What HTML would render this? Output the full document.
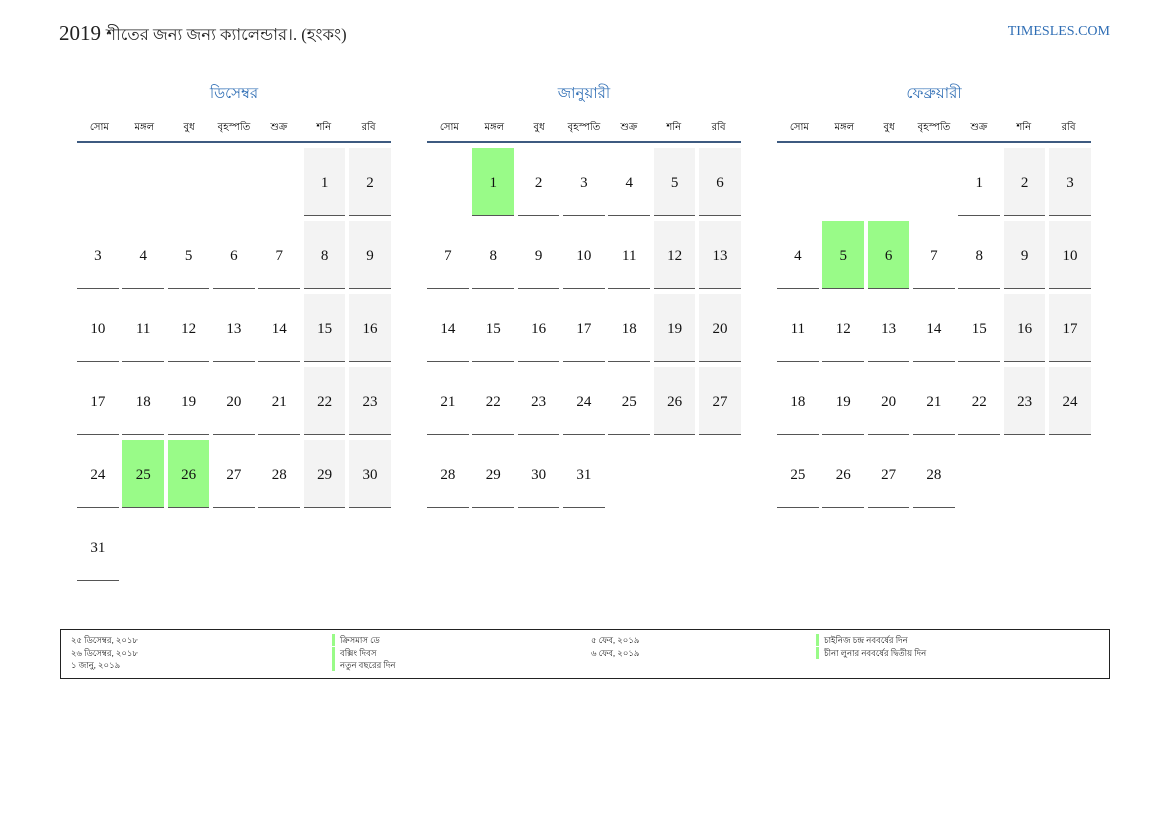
<!DOCTYPE html>
<html><head><meta charset="utf-8"><style>
body{margin:0;width:1169px;height:827px;background:#fff;position:relative;font-family:"Liberation Serif",serif;overflow:hidden}
.t{position:absolute;left:59px;top:21px;font-size:21px;color:#222}
.t .bn{font-size:16.5px}
.site{position:absolute;right:59px;top:24px;font-size:14px;color:#2e6db4}
.m{position:absolute;top:83px;width:314px}
.mt{text-align:center;color:#2e6db4;font-size:15px;height:22px;line-height:22px}
.dh{display:grid;grid-template-columns:repeat(7,1fr);margin-top:15px;font-size:10px;text-align:center;height:16px;line-height:16px;border-bottom:2px solid #3d5a80;padding-bottom:5px}
.g{display:grid;grid-template-columns:repeat(7,41.7px);column-gap:3.68px;row-gap:5px;grid-auto-rows:68px;margin-top:5px}
.g div{text-align:center;line-height:70px;font-size:15px;color:#111}
.g .f{border-bottom:1.5px solid #555}
.g .w{background:#f3f3f3}
.g .h{background:#99fb88}
.lg{position:absolute;left:60px;top:629px;width:1048px;height:48px;border:1.5px solid #222;font-size:8.5px;color:#222}
.lg span{position:absolute;line-height:12px}
.b{border-left:3px solid #99fb88;padding-left:5px}
</style></head><body>
<div class="t">2019 <span class="bn">শীতের জন্য জন্য ক্যালেন্ডার।. (হংকং)</span></div>
<div class="site">TIMESLES.COM</div>

<div class="m" style="left:77px"><div class="mt">ডিসেম্বর</div>
<div class="dh"><span>সোম</span><span>মঙ্গল</span><span>বুধ</span><span>বৃহস্পতি</span><span>শুক্র</span><span>শনি</span><span>রবি</span></div>
<div class="g">
<div></div><div></div><div></div><div></div><div></div><div class="f w">1</div><div class="f w">2</div>
<div class="f">3</div><div class="f">4</div><div class="f">5</div><div class="f">6</div><div class="f">7</div><div class="f w">8</div><div class="f w">9</div>
<div class="f">10</div><div class="f">11</div><div class="f">12</div><div class="f">13</div><div class="f">14</div><div class="f w">15</div><div class="f w">16</div>
<div class="f">17</div><div class="f">18</div><div class="f">19</div><div class="f">20</div><div class="f">21</div><div class="f w">22</div><div class="f w">23</div>
<div class="f">24</div><div class="f h">25</div><div class="f h">26</div><div class="f">27</div><div class="f">28</div><div class="f w">29</div><div class="f w">30</div>
<div class="f">31</div>
</div></div>

<div class="m" style="left:427px"><div class="mt">জানুয়ারী</div>
<div class="dh"><span>সোম</span><span>মঙ্গল</span><span>বুধ</span><span>বৃহস্পতি</span><span>শুক্র</span><span>শনি</span><span>রবি</span></div>
<div class="g">
<div></div><div class="f h">1</div><div class="f">2</div><div class="f">3</div><div class="f">4</div><div class="f w">5</div><div class="f w">6</div>
<div class="f">7</div><div class="f">8</div><div class="f">9</div><div class="f">10</div><div class="f">11</div><div class="f w">12</div><div class="f w">13</div>
<div class="f">14</div><div class="f">15</div><div class="f">16</div><div class="f">17</div><div class="f">18</div><div class="f w">19</div><div class="f w">20</div>
<div class="f">21</div><div class="f">22</div><div class="f">23</div><div class="f">24</div><div class="f">25</div><div class="f w">26</div><div class="f w">27</div>
<div class="f">28</div><div class="f">29</div><div class="f">30</div><div class="f">31</div>
</div></div>

<div class="m" style="left:777px"><div class="mt">ফেব্রুয়ারী</div>
<div class="dh"><span>সোম</span><span>মঙ্গল</span><span>বুধ</span><span>বৃহস্পতি</span><span>শুক্র</span><span>শনি</span><span>রবি</span></div>
<div class="g">
<div></div><div></div><div></div><div></div><div class="f">1</div><div class="f w">2</div><div class="f w">3</div>
<div class="f">4</div><div class="f h">5</div><div class="f h">6</div><div class="f">7</div><div class="f">8</div><div class="f w">9</div><div class="f w">10</div>
<div class="f">11</div><div class="f">12</div><div class="f">13</div><div class="f">14</div><div class="f">15</div><div class="f w">16</div><div class="f w">17</div>
<div class="f">18</div><div class="f">19</div><div class="f">20</div><div class="f">21</div><div class="f">22</div><div class="f w">23</div><div class="f w">24</div>
<div class="f">25</div><div class="f">26</div><div class="f">27</div><div class="f">28</div>
</div></div>

<div class="lg">
<span style="left:10px;top:4px">২৫ ডিসেম্বর, ২০১৮</span>
<span style="left:10px;top:17px">২৬ ডিসেম্বর, ২০১৮</span>
<span style="left:10px;top:29px">১ জানু, ২০১৯</span>
<span class="b" style="left:271px;top:4px">ক্রিসমাস ডে</span>
<span class="b" style="left:271px;top:17px">বক্সিং দিবস</span>
<span class="b" style="left:271px;top:29px">নতুন বছরের দিন</span>
<span style="left:530px;top:4px">৫ ফেব, ২০১৯</span>
<span style="left:530px;top:17px">৬ ফেব, ২০১৯</span>
<span class="b" style="left:755px;top:4px">চাইনিজ চন্দ্র নববর্ষের দিন</span>
<span class="b" style="left:755px;top:17px">চীনা লুনার নববর্ষের দ্বিতীয় দিন</span>
</div>
</body></html>
